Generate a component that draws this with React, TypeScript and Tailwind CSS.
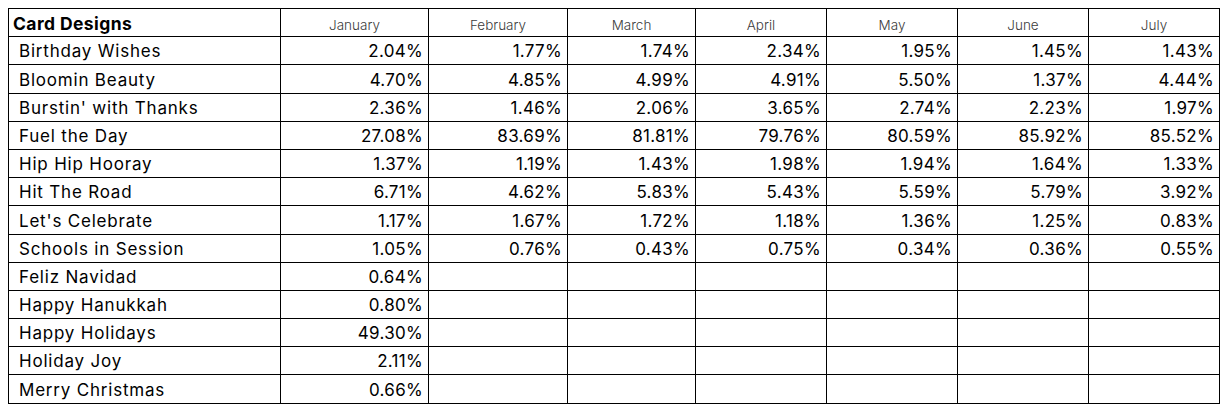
import React from 'react';

const MONTHS = ['January', 'February', 'March', 'April', 'May', 'June', 'July'];

const COL_WIDTHS = ['w-[148px]', 'w-[139px]', 'w-[128px]', 'w-[131px]', 'w-[131px]', 'w-[131px]', 'w-[131px]'];

const ROWS: { name: string; values: string[] }[] = [
  { name: 'Birthday Wishes', values: ['2.04%', '1.77%', '1.74%', '2.34%', '1.95%', '1.45%', '1.43%'] },
  { name: 'Bloomin Beauty', values: ['4.70%', '4.85%', '4.99%', '4.91%', '5.50%', '1.37%', '4.44%'] },
  { name: "Burstin' with Thanks", values: ['2.36%', '1.46%', '2.06%', '3.65%', '2.74%', '2.23%', '1.97%'] },
  { name: 'Fuel the Day', values: ['27.08%', '83.69%', '81.81%', '79.76%', '80.59%', '85.92%', '85.52%'] },
  { name: 'Hip Hip Hooray', values: ['1.37%', '1.19%', '1.43%', '1.98%', '1.94%', '1.64%', '1.33%'] },
  { name: 'Hit The Road', values: ['6.71%', '4.62%', '5.83%', '5.43%', '5.59%', '5.79%', '3.92%'] },
  { name: "Let's Celebrate", values: ['1.17%', '1.67%', '1.72%', '1.18%', '1.36%', '1.25%', '0.83%'] },
  { name: 'Schools in Session', values: ['1.05%', '0.76%', '0.43%', '0.75%', '0.34%', '0.36%', '0.55%'] },
  { name: 'Feliz Navidad', values: ['0.64%', '', '', '', '', '', ''] },
  { name: 'Happy Hanukkah', values: ['0.80%', '', '', '', '', '', ''] },
  { name: 'Happy Holidays', values: ['49.30%', '', '', '', '', '', ''] },
  { name: 'Holiday Joy', values: ['2.11%', '', '', '', '', '', ''] },
  { name: 'Merry Christmas', values: ['0.66%', '', '', '', '', '', ''] },
];

export default function App() {
  return (
    <div className="w-[1226px] h-[412px] bg-white pt-2 pl-2 font-['Inter',sans-serif] text-black leading-none">
      <table className="border-collapse table-fixed">
        <thead>
          <tr className="h-[28.2px]">
            <th className="w-[272px] border border-black pl-1 pb-[4px] align-bottom text-left text-[17.5px] font-bold tracking-[0.4px]">
              Card Designs
            </th>
            {MONTHS.map((m, i) => (
              <th
                key={m}
                className={`${COL_WIDTHS[i]} border border-black pb-[4px] align-bottom text-center text-[13.5px] font-light text-[#3c3c3c]`}
              >
                {m}
              </th>
            ))}
          </tr>
        </thead>
        <tbody>
          {ROWS.map(row => (
            <tr key={row.name} className="h-[28.2px]">
              <td className="border border-black pl-[10px] pb-[4px] align-bottom text-left text-[17px] tracking-[0.8px]">
                {row.name}
              </td>
              {row.values.map((v, i) => (
                <td
                  key={i}
                  className="border border-black pr-[5px] pb-[4px] align-bottom text-right text-[17px] tracking-[0.3px]"
                >
                  {v}
                </td>
              ))}
            </tr>
          ))}
        </tbody>
      </table>
    </div>
  );
}
